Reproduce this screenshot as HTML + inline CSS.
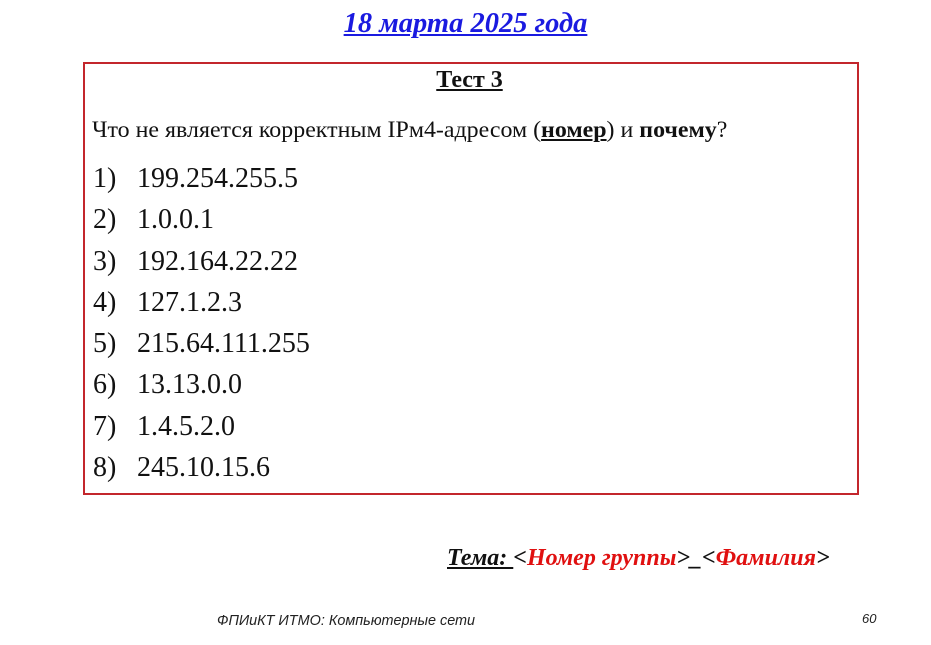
<!DOCTYPE html>
<html><head><meta charset="utf-8"><style>
body{margin:0;width:931px;height:645px;background:#fff;position:relative;overflow:hidden;font-family:"Liberation Serif","Times New Roman",serif;color:#111}
.a{position:absolute;white-space:nowrap}
#t{left:0;width:931px;text-align:center;top:8px;font-size:28.5px;font-weight:bold;font-style:italic;color:#1a1ae0;text-decoration:underline}
#box{position:absolute;left:83px;top:62px;width:772px;height:429px;border:2px solid #c3262c}
#h{left:0;width:931px;text-align:center;top:67px;font-size:24px;font-weight:bold;text-decoration:underline;padding-left:8px;box-sizing:border-box}
#q{left:92px;top:117px;font-size:23px;transform:scaleX(1.04);transform-origin:left}
.n{left:93px;font-size:28px}
.v{left:137px;font-size:28px}
#tema{left:447px;top:545px;font-size:24px;font-weight:bold;font-style:italic}
.r{color:#e01010}
#f{left:217px;top:613px;font-family:"Liberation Sans",sans-serif;font-style:italic;font-size:14.4px;color:#222}
#p{left:862px;top:611px;font-family:"Liberation Sans",sans-serif;font-style:italic;font-size:13px;color:#222}
</style></head><body>
<div class="a" id="t">18 марта 2025 года</div>
<div id="box"></div>
<div class="a" id="h">Тест 3</div>
<div class="a" id="q">Что не является корректным IPм4-адресом (<b><u>номер</u></b>) и <b>почему</b>?</div>
<div class="a n" style="top:163px">1)</div><div class="a v" style="top:163px">199.254.255.5</div>
<div class="a n" style="top:204px">2)</div><div class="a v" style="top:204px">1.0.0.1</div>
<div class="a n" style="top:246px">3)</div><div class="a v" style="top:246px">192.164.22.22</div>
<div class="a n" style="top:287px">4)</div><div class="a v" style="top:287px">127.1.2.3</div>
<div class="a n" style="top:328px">5)</div><div class="a v" style="top:328px">215.64.111.255</div>
<div class="a n" style="top:369px">6)</div><div class="a v" style="top:369px">13.13.0.0</div>
<div class="a n" style="top:411px">7)</div><div class="a v" style="top:411px">1.4.5.2.0</div>
<div class="a n" style="top:452px">8)</div><div class="a v" style="top:452px">245.10.15.6</div>
<div class="a" id="tema"><u>Тема: </u>&lt;<span class="r">Номер группы</span>&gt;_&lt;<span class="r">Фамилия</span>&gt;</div>
<div class="a" id="f">ФПИиКТ ИТМО: Компьютерные сети</div>
<div class="a" id="p">60</div>
</body></html>
